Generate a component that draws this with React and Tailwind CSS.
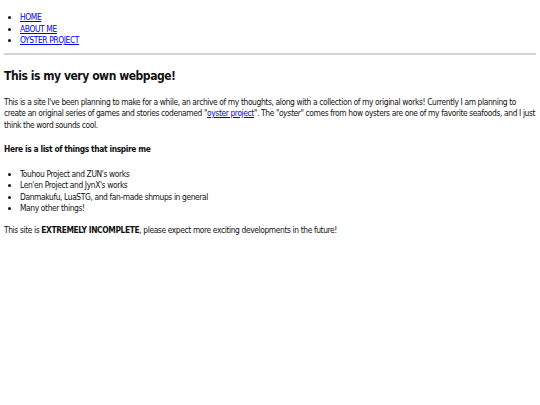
export default function App() {
  return (
    <div className="min-h-[405px] bg-white px-[4px] pt-[12px] text-[8.4px] leading-[11.5px] tracking-[-0.38px] text-[#111]" style={{ fontFamily: '"DejaVu Sans Condensed", "DejaVu Sans", sans-serif' }}>
      {/* nav */}
      <ul className="list-disc pl-[16px]">
        <li><a href="#" className="text-[#0000ee] underline">HOME</a></li>
        <li><a href="#" className="text-[#0000ee] underline">ABOUT ME</a></li>
        <li><a href="#" className="text-[#0000ee] underline">OYSTER PROJECT</a></li>
      </ul>
      <hr className="mt-[6px] border-t-[2px] border-[#d4d4d4]" />

      <h1 className="mt-[13px] text-[12px] font-bold leading-[16px] tracking-[-0.45px]">This is my very own webpage!</h1>

      <p className="mt-[13px]">
        This is a site I've been planning to make for a while, an archive of my thoughts, along with a collection of my original works! Currently I am planning to create an original series of games and stories codenamed "<a href="#" className="text-[#0000ee] underline">oyster project</a>". The "<i>oyster</i>" comes from how oysters are one of my favorite seafoods, and I just think the word sounds cool.
      </p>

      <h2 className="mt-[13px] font-bold">Here is a list of things that inspire me</h2>

      <ul className="mt-[13px] list-disc pl-[16px]">
        <li>Touhou Project and ZUN's works</li>
        <li>Len'en Project and JynX's works</li>
        <li>Danmakufu, LuaSTG, and fan-made shmups in general</li>
        <li>Many other things!</li>
      </ul>

      <p className="mt-[10px]">
        This site is <b>EXTREMELY INCOMPLETE</b>, please expect more exciting developments in the future!
      </p>
    </div>
  );
}
